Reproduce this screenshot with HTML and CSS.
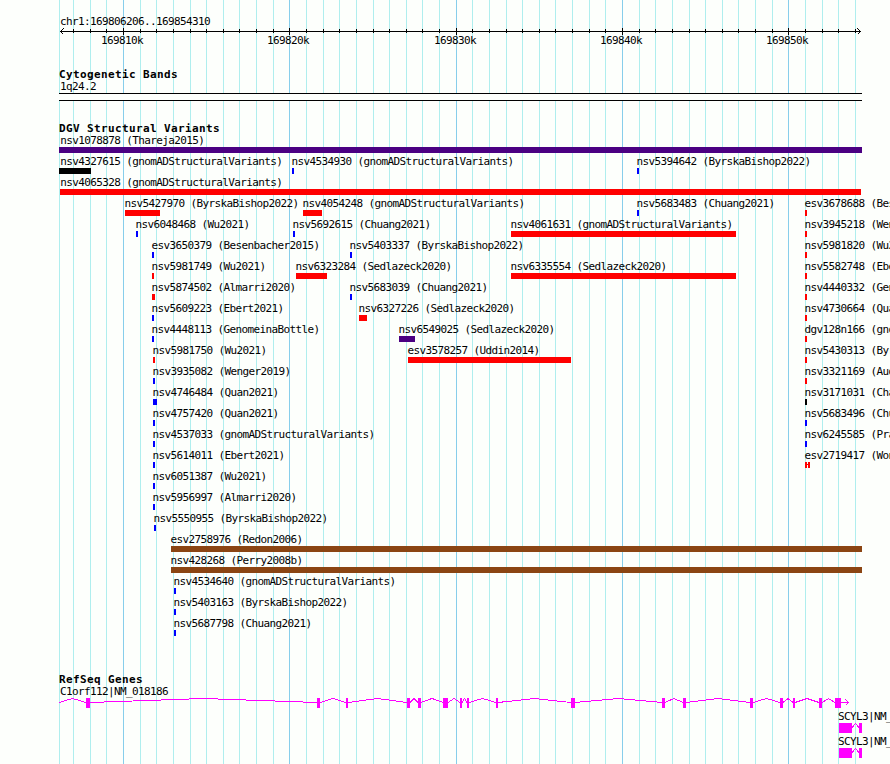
FILE: index.html
```html
<!DOCTYPE html>
<html lang="en">
<head>
<meta charset="utf-8">
<title>chr1:169806206..169854310</title>
<link rel="stylesheet" href="styles.css">
</head>
<body>
<main class="browser">
  <svg class="gridlines" id="gridlines" width="890" height="764" aria-hidden="true"></svg>
  <header class="ruler">
    <div class="label region">chr1:169806206..169854310</div>
    <svg class="axis" id="axis" width="890" height="7"></svg>
    <div class="row" id="ticks"></div>
  </header>
  <section class="track cytoband">
    <h2>Cytogenetic Bands</h2>
    <div class="label region">1q24.2</div>
    <div class="band"></div>
  </section>
  <section class="track variants">
    <h2>DGV Structural Variants</h2>
    <div id="variants"></div>
  </section>
  <section class="track genes">
    <h2>RefSeq Genes</h2>
    <div id="genes"></div>
  </section>
</main>
<script src="tracks.js"></script>
</body>
</html>
```
FILE: styles.css
```css
* { box-sizing: border-box; }
body { margin: 0; background: #fdfffc; color: #000; }
.browser {
  position: relative;
  width: 890px;
  height: 764px;
  padding-top: 14px;
  overflow: hidden;
  font-family: "DejaVu Sans Mono", monospace;
  font-size: 11px;
  line-height: 16px;
  letter-spacing: -0.622px;
}
.gridlines { position: absolute; left: 0; top: 0; }
.gridlines .minor { fill: #afeeee; }
.gridlines .major { fill: #87ceeb; }
.ruler, .track { position: relative; }
.label { height: 14px; white-space: pre; }
.region { margin-left: 60px; }
.axis { display: block; }
.ruler { height: 53px; }
.ruler .row { margin-top: -2px; }
.row { display: grid; grid-template-columns: 890px; }
.feature { grid-area: 1 / 1; margin-left: var(--x); }
.tick { grid-area: 1 / 1; margin-left: var(--x); }
h2 {
  margin: 0 0 0 59px;
  height: 12px;
  font-size: 11px;
  line-height: 16px;
  font-weight: bold;
  letter-spacing: 0.378px;
  white-space: pre;
}
.band {
  width: 803px;
  height: 8px;
  margin-left: 59px;
  border: solid #000;
  border-width: 1px 0;
  background: #fdfffc;
}
.cytoband { height: 54px; }
.variants { height: 551px; }
.variants .row { height: 21px; }
.variants .label { margin-left: var(--shift); }
.bar { width: var(--w); height: 6px; }
.red { background: #f00; }
.blue { background: #00f; }
.black { background: #000; }
.indigo { background: #4b0082; }
.brown { background: #8b4513; }
.pair {
  background: linear-gradient(#f00, #f00) 0 0 / 2px 6px no-repeat,
    linear-gradient(#f00, #f00) 3px 0 / 2px 6px no-repeat,
    linear-gradient(#f00, #f00) 0 2px / 5px 1px no-repeat;
}
.gene { height: 25px; }
.gene .label { margin-left: var(--x); }
.gene svg { display: block; }
.exon { fill: #f0f; }
.intron { fill: none; stroke: #f0f; shape-rendering: crispEdges; }
.line { fill: none; stroke: #000; shape-rendering: crispEdges; }
```
FILE: tracks.js
```js
const byId = id => document.getElementById(id);

// Grid lines and ruler: one tick per 1 kb, a major one per 10 kb.
const ticks = [59, 73, 90, 106, 123, 140, 156, 173, 190, 206, 223, 239, 256, 273,
  289, 306, 323, 339, 356, 373, 389, 406, 422, 439, 456, 472, 489, 506, 522, 539,
  555, 572, 589, 605, 622, 639, 655, 672, 689, 705, 722, 738, 755, 772, 788, 805,
  822, 838, 855];
const majors = { 123: "169810k", 289: "169820k", 456: "169830k", 622: "169840k", 788: "169850k" };

byId("gridlines").innerHTML = ticks.map(x =>
  `<rect class="${majors[x] ? "major" : "minor"}" x="${x}" y="0" width="1" height="764"/>`).join("");

byId("axis").innerHTML =
  '<rect x="60" y="3" width="801" height="1"/>' +
  '<path class="line" d="M63.5 0.5L60.5 3.5L63.5 6.5M857.5 0.5L860.5 3.5L857.5 6.5"/>' +
  ticks.slice(1).map(x => majors[x]
    ? `<rect x="${x}" y="0" width="1" height="7"/>`
    : `<rect x="${x}" y="1" width="1" height="4"/>`).join("");

byId("ticks").innerHTML = Object.entries(majors).map(([x, name]) =>
  `<span class="tick" style="--x:${x - 22}px">${name}</span>`).join("");

// Variant rows: [name, left, width, colour]
const rows = [
  [["nsv1078878 (Thareja2015)", 59, 803, "indigo"]],
  [["nsv4327615 (gnomADStructuralVariants)", 59, 32, "black"], ["nsv4534930 (gnomADStructuralVariants)", 292, 2, "blue"], ["nsv5394642 (ByrskaBishop2022)", 637, 2, "blue"]],
  [["nsv4065328 (gnomADStructuralVariants)", 60, 801, "red"]],
  [["nsv5427970 (ByrskaBishop2022)", 125, 35, "red"], ["nsv4054248 (gnomADStructuralVariants)", 303, 19, "red"], ["nsv5683483 (Chuang2021)", 637, 2, "blue"], ["esv3678688 (Bes", 805, 2, "red"]],
  [["nsv6048468 (Wu2021)", 136, 2, "blue"], ["nsv5692615 (Chuang2021)", 293, 2, "blue"], ["nsv4061631 (gnomADStructuralVariants)", 511, 225, "red"], ["nsv3945218 (Wen", 805, 2, "red"]],
  [["esv3650379 (Besenbacher2015)", 152, 2, "blue"], ["nsv5403337 (ByrskaBishop2022)", 350, 2, "blue"], ["nsv5981820 (Wu2", 805, 2, "red"]],
  [["nsv5981749 (Wu2021)", 152, 2, "red"], ["nsv6323284 (Sedlazeck2020)", 296, 31, "red"], ["nsv6335554 (Sedlazeck2020)", 511, 225, "red"], ["nsv5582748 (Ebe", 805, 2, "red"]],
  [["nsv5874502 (Almarri2020)", 152, 3, "red"], ["nsv5683039 (Chuang2021)", 350, 2, "blue"], ["nsv4440332 (Gen", 805, 2, "red"]],
  [["nsv5609223 (Ebert2021)", 152, 2, "blue"], ["nsv6327226 (Sedlazeck2020)", 359, 8, "red"], ["nsv4730664 (Qua", 805, 2, "red"]],
  [["nsv4448113 (GenomeinaBottle)", 152, 2, "blue"], ["nsv6549025 (Sedlazeck2020)", 399, 16, "indigo"], ["dgv128n166 (gno", 805, 2, "red"]],
  [["nsv5981750 (Wu2021)", 153, 2, "red"], ["esv3578257 (Uddin2014)", 408, 163, "red"], ["nsv5430313 (Byr", 805, 2, "red"]],
  [["nsv3935082 (Wenger2019)", 153, 2, "blue"], ["nsv3321169 (Aud", 805, 2, "red"]],
  [["nsv4746484 (Quan2021)", 153, 4, "blue"], ["nsv3171031 (Cha", 805, 2, "black"]],
  [["nsv4757420 (Quan2021)", 153, 2, "blue"], ["nsv5683496 (Chu", 805, 2, "blue"]],
  [["nsv4537033 (gnomADStructuralVariants)", 153, 2, "blue"], ["nsv6245585 (Pra", 805, 2, "blue"]],
  [["nsv5614011 (Ebert2021)", 153, 2, "blue"], ["esv2719417 (Won", 805, 5, "pair"]],
  [["nsv6051387 (Wu2021)", 153, 2, "blue"]],
  [["nsv5956997 (Almarri2020)", 153, 2, "blue"]],
  [["nsv5550955 (ByrskaBishop2022)", 154, 2, "blue"]],
  [["esv2758976 (Redon2006)", 171, 691, "brown"]],
  [["nsv428268 (Perry2008b)", 171, 691, "brown"]],
  [["nsv4534640 (gnomADStructuralVariants)", 174, 2, "blue"]],
  [["nsv5403163 (ByrskaBishop2022)", 174, 2, "blue"]],
  [["nsv5687798 (Chuang2021)", 174, 2, "blue"]]
];

byId("variants").innerHTML = rows.map(row => `<div class="row">${row.map(([name, x, w, colour]) =>
  `<div class="feature" style="--x:${x}px;--w:${w}px;--shift:${Math.max(60.3, x - 0.6) - x}px">` +
  `<div class="label">${name}</div><div class="bar ${colour}"></div></div>`).join("")}</div>`).join("");

// Genes: exons as [start, end]; introns are peaked lines between them.
const genes = [
  { name: "C1orf112|NM_018186", x: 60, from: 59, arrow: true,
    exons: [[86, 90], [317, 320], [346, 348], [407, 410], [418, 421], [443, 448], [460, 462],
      [467, 469], [496, 498], [571, 575], [662, 665], [683, 686], [750, 753], [780, 783],
      [793, 795], [819, 822], [835, 841]] },
  { name: "SCYL3|NM_", x: 838, exons: [[839, 852], [859, 862]] },
  { name: "SCYL3|NM_", x: 838, exons: [[839, 852], [859, 862]] }
];

byId("genes").innerHTML = genes.map(g => {
  let end = g.from;
  let art = "";
  for (const [a, b] of g.exons) {
    if (end !== undefined) {
      art += `<path class="intron" d="M${end} 4.5L${(end + a) / 2} 0.5L${a} 4.5"/>`;
    }
    art += `<rect class="exon" x="${a}" y="0" width="${b - a}" height="10"/>`;
    end = b;
  }
  if (g.arrow) art += '<path class="intron" d="M841 4.5H849M845.5 1.5L848.5 4.5L845.5 7.5"/>';
  return `<div class="gene"><div class="label" style="--x:${g.x}px">${g.name}</div>` +
    `<svg width="890" height="10">${art}</svg></div>`;
}).join("");
```
